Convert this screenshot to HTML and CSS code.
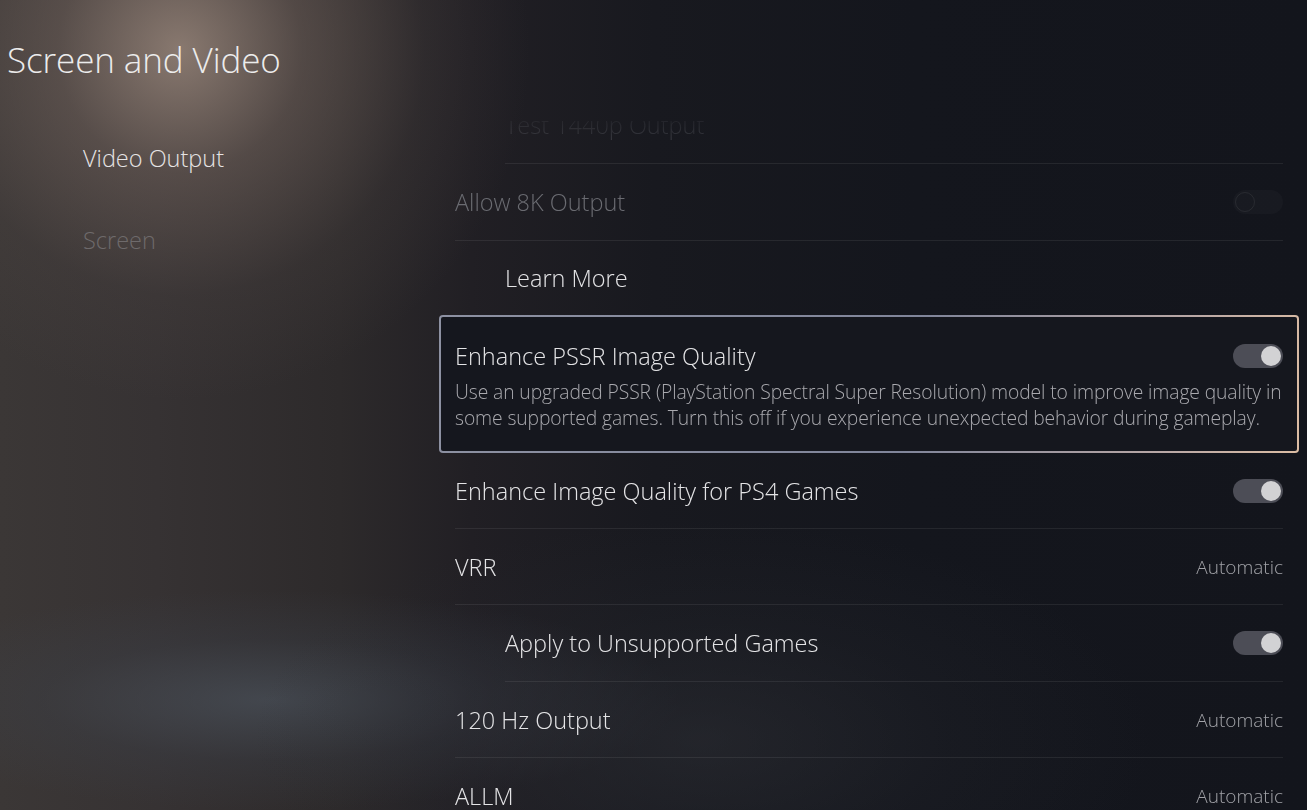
FILE: index.html
```html
<!DOCTYPE html>
<html lang="en">
<head>
<meta charset="utf-8">
<title>Screen and Video</title>
<link rel="stylesheet" href="styles.css">
</head>
<body>
<div class="bg-spot"></div>
<div class="bg-glow"></div>
<div class="bg-glow2"></div>
<div class="page">
  <nav class="side">
    <h1 class="side-title">Screen and Video</h1>
    <ul class="side-menu">
      <li class="side-item active">Video Output</li>
      <li class="side-item">Screen</li>
    </ul>
  </nav>
  <main class="panel">
    <div class="list">
      <div class="row sub ghost"><span class="label">Test 1440p Output</span></div>
      <div class="row dim tall">
        <span class="label">Allow 8K Output</span>
        <span class="toggle off"><span class="knob"></span></span>
      </div>
      <div class="row sub noline"><span class="label">Learn More</span></div>
      <div class="focus">
        <div class="focus-head">
          <span class="label">Enhance PSSR Image Quality</span>
          <span class="toggle on"><span class="knob"></span></span>
        </div>
        <p class="desc">Use an upgraded PSSR (PlayStation Spectral Super Resolution) model to improve image quality in some supported games. Turn this off if you experience unexpected behavior during gameplay.</p>
      </div>
      <div class="row">
        <span class="label">Enhance Image Quality for PS4 Games</span>
        <span class="toggle on"><span class="knob"></span></span>
      </div>
      <div class="row">
        <span class="label">VRR</span>
        <span class="value">Automatic</span>
      </div>
      <div class="row sub tall">
        <span class="label">Apply to Unsupported Games</span>
        <span class="toggle on"><span class="knob"></span></span>
      </div>
      <div class="row">
        <span class="label">120 Hz Output</span>
        <span class="value">Automatic</span>
      </div>
      <div class="row">
        <span class="label">ALLM</span>
        <span class="value">Automatic</span>
      </div>
    </div>
  </main>
</div>
</body>
</html>
```

FILE: styles.css
```css
* { box-sizing: border-box; }
html, body {
  margin: 0;
  padding: 0;
  width: 1307px;
  height: 810px;
  overflow: hidden;
}
body {
  position: relative;
  font-family: "Open Sans", "Noto Sans", sans-serif;
  font-weight: 300;
  color: #e4e4e6;
  background:
    linear-gradient(to right,
      #3b3736 0%,
      #363233 12%,
      #2d2a2b 26%,
      #211f24 36%,
      #18191f 50%,
      #14161d 70%,
      #13151c 100%);
}
.bg-spot {
  position: absolute;
  left: -170px;
  top: -300px;
  width: 700px;
  height: 700px;
  background: radial-gradient(closest-side,
    rgba(165,145,132,0.75) 0%,
    rgba(125,108,100,0.45) 35%,
    rgba(85,75,72,0.2) 70%,
    rgba(60,55,55,0) 100%);
  pointer-events: none;
}
.bg-glow {
  position: absolute;
  left: -140px;
  top: 590px;
  width: 820px;
  height: 220px;
  background: radial-gradient(closest-side,
    rgba(82,92,104,0.55) 0%,
    rgba(62,68,78,0.3) 55%,
    rgba(40,42,50,0) 100%);
  pointer-events: none;
}
.bg-glow2 {
  position: absolute;
  left: 250px;
  top: 520px;
  width: 900px;
  height: 440px;
  background: radial-gradient(closest-side,
    rgba(50,52,58,0.45) 0%,
    rgba(40,42,48,0.22) 55%,
    rgba(30,32,38,0) 100%);
  pointer-events: none;
}
.page {
  position: relative;
  display: flex;
  height: 810px;
}
.side {
  width: 439px;
  flex: none;
}
.side-title {
  margin: 39px 0 0 7px;
  font-size: 35px;
  line-height: 42px;
  font-weight: 300;
  color: #ececec;
  letter-spacing: -0.1px;
}
.side-menu {
  list-style: none;
  margin: 62px 0 0 83px;
  padding: 0;
}
.side-item {
  font-size: 23.5px;
  line-height: 30px;
  height: 82px;
  color: #6e6a6b;
}
.side-item.active {
  color: #e6e4e4;
}
.panel {
  flex: 1;
  padding: 121px 8px 0 0;
}
.list {
  height: 689px;
  overflow: hidden;
  padding: 0 16px;
  -webkit-mask-image: linear-gradient(to bottom, rgba(0,0,0,0.25) 0px, #000 40px);
  mask-image: linear-gradient(to bottom, rgba(0,0,0,0.25) 0px, #000 40px);
}
.row {
  height: 76px;
  display: flex;
  align-items: center;
  justify-content: space-between;
  border-bottom: 1px solid rgba(255,255,255,0.075);
  font-size: 23.5px;
  line-height: 30px;
}
.row.tall { height: 77px; }
.row.sub { margin-left: 50px; }
.row.noline { border-bottom: none; height: 74px; }
.row.ghost {
  height: 77px;
  margin-top: -34px;
  color: rgba(120,122,130,0.5);
}
.row.dim { color: #6a6b71; }
.value {
  font-size: 19px;
  color: #a2a3a8;
}
.toggle {
  position: relative;
  width: 50px;
  height: 24px;
  border-radius: 12px;
  flex: none;
}
.toggle.on { background: #4c4d56; }
.toggle.on .knob {
  position: absolute;
  right: 2px;
  top: 2px;
  width: 20px;
  height: 20px;
  border-radius: 50%;
  background: #d2d2d4;
}
.toggle.off { background: rgba(255,255,255,0.025); }
.toggle.off .knob {
  position: absolute;
  left: 2px;
  top: 2px;
  width: 20px;
  height: 20px;
  border-radius: 50%;
  border: 1px solid rgba(255,255,255,0.07);
}
.focus {
  margin: 0 -16px;
  height: 138px;
  padding: 24px 14px 0 14px;
  border: 2px solid transparent;
  border-radius: 4px;
  background:
    linear-gradient(#15171e, #15171e) padding-box,
    linear-gradient(100deg, #8d91a2 0%, #80859a 55%, #b9a8a6 85%, #dcbda4 100%) border-box;
}
.focus-head {
  display: flex;
  align-items: center;
  justify-content: space-between;
  font-size: 23.5px;
  line-height: 30px;
}
.desc {
  margin: 8px -14px 0 0;
  font-size: 19.3px;
  line-height: 26px;
  color: #a9a9ae;
  letter-spacing: -0.1px;
}
```
